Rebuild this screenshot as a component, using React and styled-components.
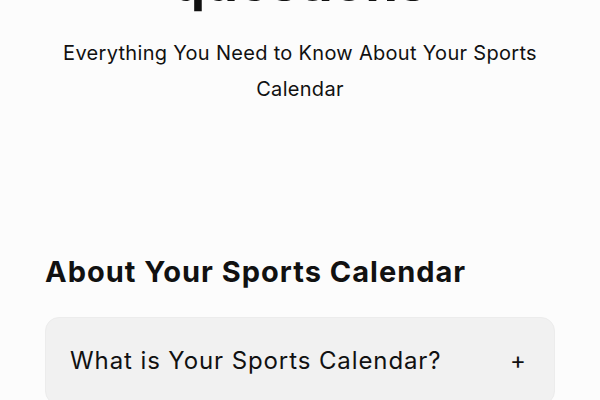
import React from 'react'
import styled, { createGlobalStyle } from 'styled-components'

const GlobalStyle = createGlobalStyle`
  html, body {
    margin: 0;
    padding: 0;
    background: #fcfcfc;
  }
  body {
    font-family: Inter, "Noto Sans", sans-serif;
    color: #111111;
    overflow: hidden;
  }
`

const faqs = [
  { question: 'What is Your Sports Calendar?' },
  { question: 'How do I add events to my calendar?' },
]

export default function App() {
  return (
    <>
      <GlobalStyle />
      <Page>
        <Hero>
          <Title>Frequently asked<br />questions</Title>
          <Subtitle>Everything You Need to Know About Your Sports Calendar</Subtitle>
        </Hero>
        <Section>
          <SectionTitle>About Your Sports Calendar</SectionTitle>
          <List>
            {faqs.map((item) => (
              <Item key={item.question}>
                <Question>{item.question}</Question>
                <Toggle aria-label="expand">+</Toggle>
              </Item>
            ))}
          </List>
        </Section>
      </Page>
    </>
  )
}

const Page = styled.main`
  padding: 0 45px;
  margin-top: -113px;
`

const Hero = styled.header`
  display: flex;
  flex-direction: column;
  align-items: center;
  text-align: center;
`

const Title = styled.h1`
  margin: 0;
  font-size: 52px;
  line-height: 64px;
  font-weight: 700;
  letter-spacing: 0.4px;
`

const Subtitle = styled.p`
  margin: 20px 0 0;
  max-width: 490px;
  font-size: 20px;
  line-height: 36px;
  font-weight: 400;
  letter-spacing: 0.3px;
`

const Section = styled.section`
  padding-top: 147px;
`

const SectionTitle = styled.h2`
  margin: 0 0 27px;
  font-size: 29px;
  line-height: 36px;
  font-weight: 700;
  letter-spacing: 1px;
`

const List = styled.div`
  display: flex;
  flex-direction: column;
  gap: 16px;
`

const Item = styled.div`
  display: flex;
  align-items: center;
  justify-content: space-between;
  padding: 26px 28px 26px 24px;
  background: #f1f1f1;
  border: 1px solid #ececec;
  border-radius: 14px;
`

const Question = styled.span`
  font-size: 24px;
  line-height: 34px;
  letter-spacing: 0.9px;
`

const Toggle = styled.button`
  border: none;
  background: none;
  padding: 0;
  font-family: inherit;
  font-size: 24px;
  line-height: 34px;
  color: #111111;
  cursor: pointer;
`
